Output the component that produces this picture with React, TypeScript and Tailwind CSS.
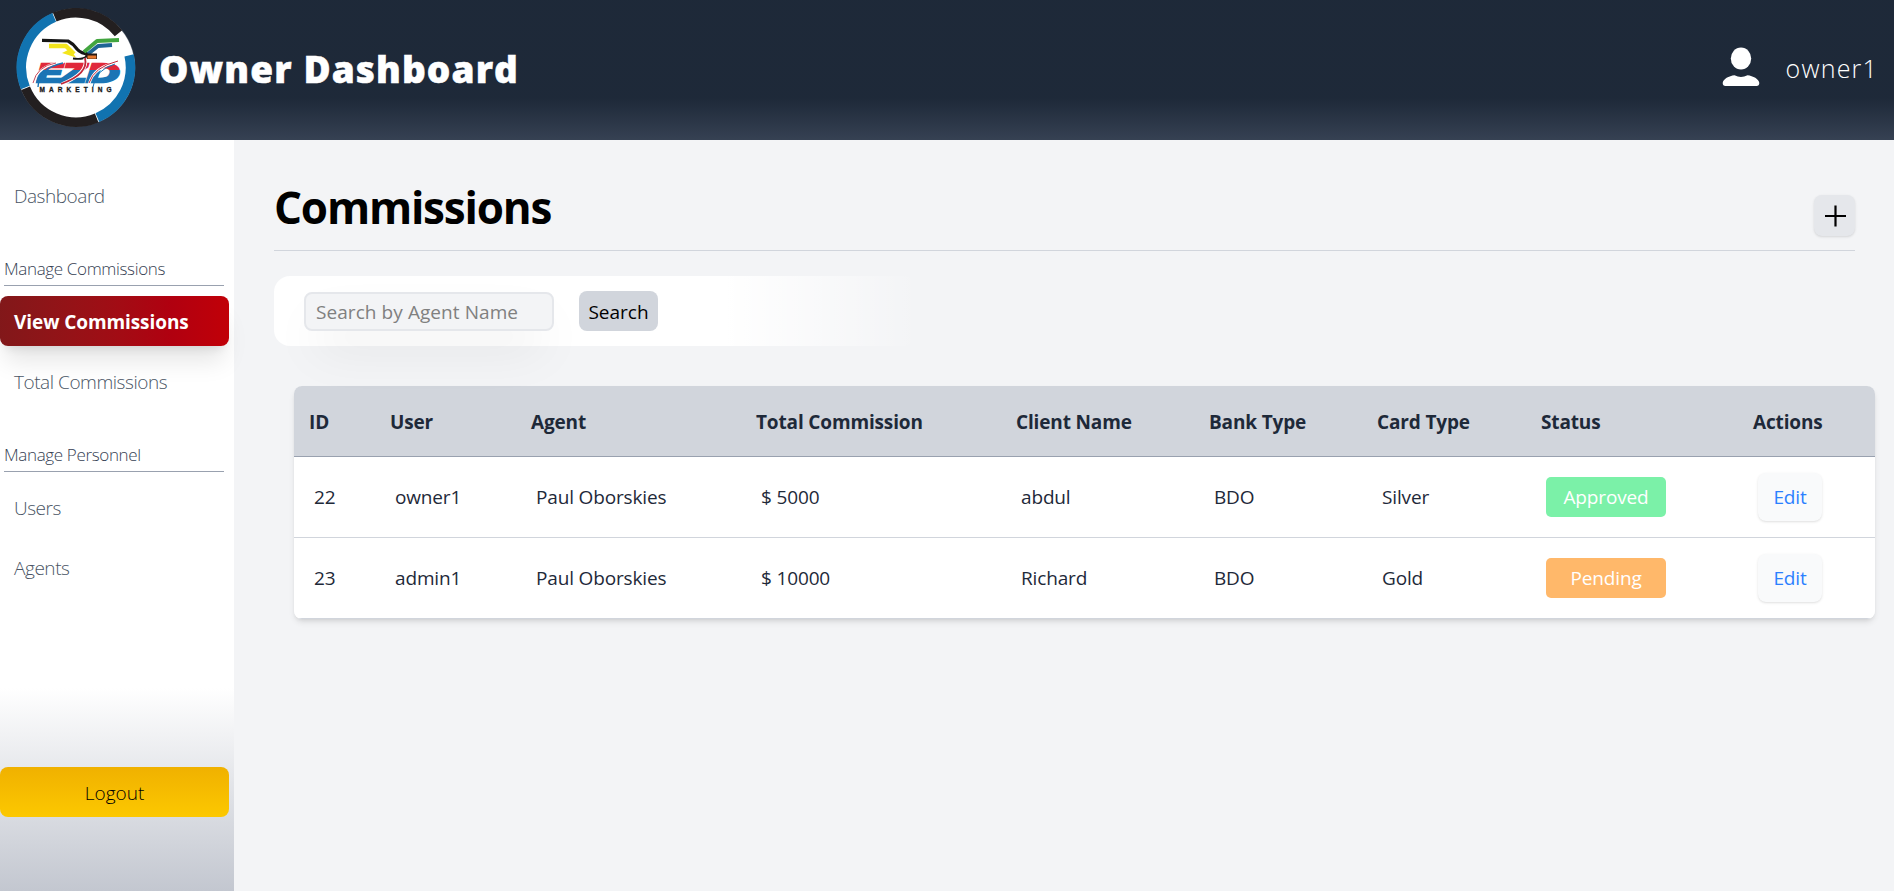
import React from "react";

const columns = [
  { label: "ID", width: "w-[81px]" },
  { label: "User", width: "w-[141px]" },
  { label: "Agent", width: "w-[225px]" },
  { label: "Total Commission", width: "w-[260px]" },
  { label: "Client Name", width: "w-[193px]" },
  { label: "Bank Type", width: "w-[168px]" },
  { label: "Card Type", width: "w-[164px]" },
  { label: "Status", width: "w-[212px]" },
  { label: "Actions", width: "w-[137px]" },
];

const rows = [
  { id: "22", user: "owner1", agent: "Paul Oborskies", total: "$ 5000", client: "abdul", bank: "BDO", card: "Silver", status: "Approved" },
  { id: "23", user: "admin1", agent: "Paul Oborskies", total: "$ 10000", client: "Richard", bank: "BDO", card: "Gold", status: "Pending" },
];

const statusColors: Record<string, string> = {
  Approved: "bg-green-300",
  Pending: "bg-orange-300",
};

function Logo() {
  return (
    <svg width="120" height="120" viewBox="0 0 120 120" className="mb-[5px] shrink-0">
      <defs>
        <linearGradient id="letters" gradientUnits="userSpaceOnUse" x1="0" y1="54" x2="0" y2="76">
          <stop offset="0.38" stopColor="#e0283a" />
          <stop offset="0.38" stopColor="#1b75b5" />
        </linearGradient>
      </defs>
      <circle cx="60" cy="59.500" r="59.300" fill="#5b6470" />
      <circle cx="60" cy="59.500" r="58.800" fill="#fff" />
      <g fill="none" strokeWidth="9.500">
        <path d="M38.700 9 A54.500 54.500 0 0 1 102.500 25.300" stroke="#231f20" />
        <path d="M113.100 47.400 A54.500 54.500 0 0 1 81.400 109.600" stroke="#1173b0" />
        <path d="M80.700 110 A54.500 54.500 0 0 1 9.600 80.300" stroke="#231f20" />
        <path d="M9.300 79.600 A54.500 54.500 0 0 1 38.200 9.300" stroke="#1173b0" />
      </g>
      <g fill="none" strokeLinejoin="round">
        <path d="M33 38 H50 L58 46" stroke="#f3e51c" strokeWidth="4.500" />
        <path d="M54 41 L60 49.500 L46 45 Z" fill="#f3e51c" />
        <path d="M26 32.300 L52 33 Q57 35.500 61 41 Q65 46 74 46" stroke="#151515" strokeWidth="3.200" />
        <path d="M103 32 L81 33 L68 44" stroke="#42a53f" strokeWidth="3.800" />
        <path d="M96 37 L82 38 L72 46" stroke="#1f6595" strokeWidth="3.800" />
        <path d="M57 50.500 Q67 52 71 48" stroke="#151515" strokeWidth="1.800" />
      </g>
      <path d="M69 45.500 H81 V51 H70 Z" fill="#241914" />
      <path d="M71.500 47.500 H80.300 V50.700 H71.500 Z" fill="#e6772c" />
      <g
        fill="url(#letters)"
        stroke="url(#letters)"
        strokeWidth="2.600"
        fontFamily="Liberation Sans, sans-serif"
        fontWeight="700"
        fontStyle="italic"
        fontSize="25"
      >
        <text x="21" y="74" textLength="25" lengthAdjust="spacingAndGlyphs">E</text>
        <text x="46" y="74" textLength="24" lengthAdjust="spacingAndGlyphs">Z</text>
        <text x="71" y="74" textLength="32" lengthAdjust="spacingAndGlyphs">D</text>
      </g>
      <g fill="none">
        <path d="M18 76 Q20 57 48 54" stroke="#fff" strokeWidth="2.500" />
        <path d="M22 79 Q23 60 47 55" stroke="#1b75b5" strokeWidth="1.400" />
        <path d="M17 75 Q21 58 40 55" stroke="#c8485a" strokeWidth="1" />
        <path d="M69 50 Q73 65 46 76" stroke="#fff" strokeWidth="3.500" />
        <path d="M69 50 Q73 66 45 76" stroke="#c0283a" strokeWidth="1.800" />
        <path d="M73 76 Q78 58 103 54" stroke="#fff" strokeWidth="2.500" />
        <path d="M73 75 Q78 59 102 53" stroke="#c0283a" strokeWidth="1" />
        <path d="M77 79 Q79 62 99 56" stroke="#1b75b5" strokeWidth="1" />
      </g>
      <text
        x="23.500"
        y="83.500"
        textLength="72"
        fontFamily="Liberation Sans, sans-serif"
        fontWeight="700"
        fontSize="6.500"
        fill="#1a1a1a"
        stroke="#1a1a1a"
        strokeWidth="0.300"
      >
        MARKETING
      </text>
    </svg>
  );
}

function UserIcon() {
  return (
    <svg width="38" height="40" viewBox="0 0 38 40" fill="#fff">
      <ellipse cx="19" cy="11.500" rx="10.200" ry="11" />
      <path d="M12.500 28.200 Q19 31.800 25.500 28.200 C31 28.800 37 32 37.300 36 Q37.300 39 34.500 39 H3.500 Q0.700 39 0.700 36 C1 32 7 28.800 12.500 28.200 Z" />
    </svg>
  );
}

function NavItem({ label }: { label: string }) {
  return (
    <a className="flex h-[50px] w-[229px] items-center pt-0.5 pl-3.5 text-[19px] font-light tracking-[-0.45px] text-gray-600">
      {label}
    </a>
  );
}

function NavHeading({ label }: { label: string }) {
  return (
    <div className="mb-2.5 ml-1 flex h-[66px] w-[220px] items-end border-b border-gray-400 pb-1 text-[17px] leading-6 font-light tracking-[-0.35px] text-gray-700">
      {label}
    </div>
  );
}

export default function App() {
  return (
    <div className="flex h-[891px] w-full flex-col overflow-hidden bg-gray-100 font-['Open_Sans','Noto_Sans',sans-serif]">
      <header className="flex h-[140px] shrink-0 items-center justify-between bg-linear-to-b from-gray-800 from-70% to-gray-700 pl-4 text-white">
        <div className="flex items-center">
          <Logo />
          <h1 className="ml-[23px] pb-0.5 text-[37px] font-extrabold tracking-[1.1px] [-webkit-text-stroke:0.5px_white]">
            Owner Dashboard
          </h1>
        </div>
        <div className="flex items-center gap-[26px] pr-4">
          <div className="pb-1.5"><UserIcon /></div>
          <span className="pb-0.5 text-[25px] font-light tracking-[1.2px]">owner1</span>
        </div>
      </header>

      <div className="flex min-h-0 flex-1">
        <aside className="flex w-[234px] shrink-0 flex-col bg-linear-to-b from-white from-73% to-[#c3c7d0] pt-[30px]">
          <NavItem label="Dashboard" />
          <NavHeading label="Manage Commissions" />
          <a className="mb-2.5 flex h-[50px] w-[229px] shrink-0 items-center rounded-lg bg-linear-to-r from-red-900 to-red-700 pt-0.5 pl-3.5 text-[19px] font-bold tracking-[-0.08px] text-white shadow-xl">
            View Commissions
          </a>
          <NavItem label="Total Commissions" />
          <NavHeading label="Manage Personnel" />
          <NavItem label="Users" />
          <div className="h-2.5" />
          <NavItem label="Agents" />
          <button className="mt-auto mb-[74px] flex h-[50px] w-[229px] items-center justify-center rounded-lg bg-linear-to-b from-yellow-500 to-[#fcc800] pt-0.5 text-[19px] font-light text-black">
            Logout
          </button>
        </aside>

        <main className="min-w-0 flex-1 pl-10">
          <div className="flex h-[111px] w-[1581px] justify-between border-b border-gray-300">
            <h2 className="pt-[37px] text-[44px] leading-[60px] font-bold tracking-[-1.2px] text-black">Commissions</h2>
            <button className="mt-[55px] flex h-[41px] w-[41px] items-center justify-center rounded-lg bg-gray-200 shadow-sm">
              <svg width="22" height="22" viewBox="0 0 22 22" stroke="#000" strokeWidth="2.200">
                <path d="M11.500 0.500 V21.500 M1 11 H22" />
              </svg>
            </button>
          </div>

          <form className="mt-[25px] flex h-[70px] w-[645px] items-center rounded-2xl bg-linear-to-r from-white from-70% to-white/0 pl-[30px]">
            <input
              placeholder="Search by Agent Name"
              className="h-[39px] w-[250px] rounded-lg border-2 border-gray-200 bg-gray-100 pt-0.5 pl-2.5 text-[19px] tracking-[0.07px] shadow-[0_25px_50px_-12px_rgb(0_0_0/0.13)] placeholder:text-[#808080]"
            />
            <button type="button" className="ml-[25px] h-10 w-[79px] rounded-lg bg-gray-300 pt-0.5 text-[19px] text-black">
              Search
            </button>
          </form>

          <div className="mt-10 ml-5 w-[1581px] overflow-hidden rounded-lg shadow-md">
            <table className="w-full table-fixed border-collapse bg-white text-left text-[19px] tracking-[-0.15px] text-gray-800">
              <thead>
                <tr className="h-[70px] border-b border-gray-400 bg-gray-300">
                  {columns.map((column) => (
                    <th key={column.label} className={`${column.width} pt-0.5 pl-[15px] font-bold whitespace-nowrap`}>
                      {column.label}
                    </th>
                  ))}
                </tr>
              </thead>
              <tbody>
                {rows.map((row) => (
                  <tr key={row.id} className="h-[81px] border-b border-gray-300">
                    <td className="pt-0.5 pl-5">{row.id}</td>
                    <td className="pt-0.5 pl-5">{row.user}</td>
                    <td className="pt-0.5 pl-5">{row.agent}</td>
                    <td className="pt-0.5 pl-5">{row.total}</td>
                    <td className="pt-0.5 pl-5">{row.client}</td>
                    <td className="pt-0.5 pl-5">{row.bank}</td>
                    <td className="pt-0.5 pl-5">{row.card}</td>
                    <td className="pl-5">
                      <div className={`flex h-10 w-[120px] items-center justify-center rounded-[5px] pt-0.5 text-white ${statusColors[row.status]}`}>
                        {row.status}
                      </div>
                    </td>
                    <td className="pl-5">
                      <button className="flex h-12 w-[64px] items-center justify-center rounded-lg bg-gray-50 pt-0.5 text-blue-500 shadow-sm">
                        Edit
                      </button>
                    </td>
                  </tr>
                ))}
              </tbody>
            </table>
          </div>
        </main>
      </div>
    </div>
  );
}
